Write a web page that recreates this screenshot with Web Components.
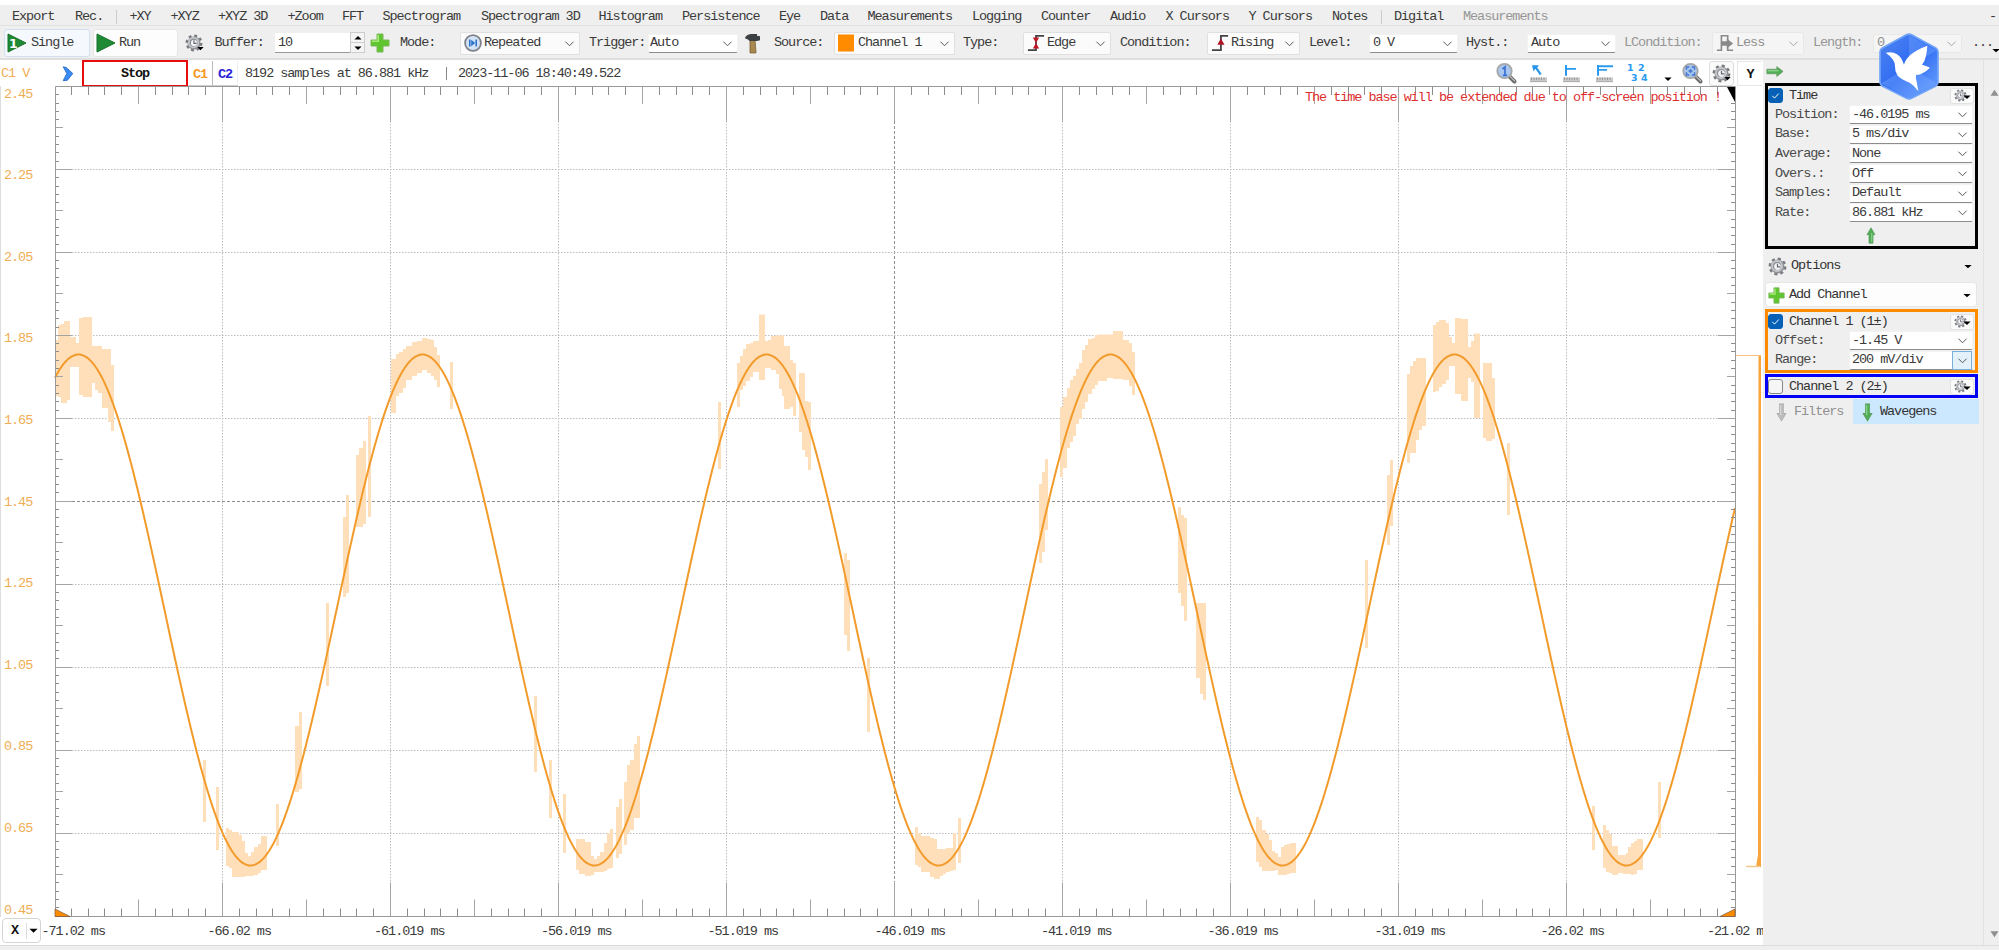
<!DOCTYPE html>
<html lang="en">
<head>
<meta charset="utf-8">
<title>Oscilloscope</title>
<style>
  html, body {
    margin: 0;
    width: 1999px;
    height: 950px;
    overflow: hidden;
    background: #fff;
  }
</style>
</head>
<body>
<scope-app></scope-app>

<script>
const define = (tagName, html, setup) => {
  const template = document.createElement('template');
  template.innerHTML = html;

  customElements.define(tagName, class extends HTMLElement {
    constructor() {
      super();
      this.attachShadow({ mode: 'open' }).appendChild(template.content.cloneNode(true));
    }

    connectedCallback() {
      setup?.call(this, this.shadowRoot);
    }
  });
};

/* ---------- icons ---------- */

const magnifier = (inner) => `
  <path d="M13.500 13.500l5 5" stroke="#6b6b6b" stroke-width="4" stroke-linecap="round"/>
  <path d="M14 13.300l4.600 4.600" stroke="#c4c4c4" stroke-width="1.200" stroke-linecap="round"/>
  <circle cx="8.500" cy="8" r="7.200" fill="#a9c6ee" stroke="#a6a6a6" stroke-width="1.800"/>
  ${inner}`;

const ruler = '<rect x="1" y="15" width="17" height="5" fill="#c9c9c9"/><path d="M2.500 15v2.500M5 15v2.500M7.500 15v2.500M10 15v2.500M12.500 15v2.500M15 15v2.500" stroke="#888" stroke-width=".9"/><path d="M1 19.600h17" stroke="#aaa"/>';

const arrow = (from, to, edge) => `<path d="M6 1h8v10h4L10 19 2 11h4z" fill="${from}" stroke="${edge}" stroke-width="1.100"/><path d="M8.500 2v11" stroke="${to}" stroke-width="2"/>`;

const icons = {
  single: '<path d="M1 1l18 9-18 9z" fill="#1e8a33" stroke="#14702a"/><text x="2" y="14.500" font-size="12.500" font-weight="700" fill="#fff" font-family="DejaVu Sans, sans-serif">1</text>',
  run: '<path d="M1 1l18 9-18 9z" fill="#1e8a33" stroke="#14702a"/>',
  gear: `<circle cx="10" cy="10" r="7.800" fill="none" stroke="#77797c" stroke-width="3.200" stroke-dasharray="3.100 3.026"/>
    <circle cx="10" cy="10" r="5.300" fill="none" stroke="#8d9095" stroke-width="4"/>
    <circle cx="9.500" cy="9.500" r="5.300" fill="none" stroke="#c3c6ca" stroke-width="2"/>
    <circle cx="10" cy="10" r="3.300" fill="#f3f3f3"/><path d="M10 7v3.500h3" fill="none" stroke="#667" stroke-width="1.300"/>`,
  plus: '<path d="M7 1h6v6h6v6h-6v6H7v-6H1V7h6z" fill="#5fc52e" stroke="#7bb85c"/><path d="M8.200 2v6.200H2" fill="none" stroke="#a6ea78" stroke-width="1.600"/>',
  repeated: '<circle cx="10" cy="10" r="8.800" fill="#d5e3f6" stroke="#7e8289" stroke-width="2"/><path d="M5.500 6h1.800v8H5.500zM12.700 6h1.800v8h-1.800zM12.500 10L8 6.500v7z" fill="#2c74c9"/>',
  hammer: '<path d="M8 6h5l1 13H8z" fill="#a98850" stroke="#7d6236" stroke-width=".8"/><path d="M3 5c1-3 4-4 7-4h5v1.500l3 .5v4l-3 .5H7.500C6 6 4.500 5.500 3 5z" fill="#3d4043"/>',
  square: '<rect x="2" y="1.500" width="16" height="17" fill="#ff8c00"/>',
  edge: '<path d="M1 18h9V2h9" fill="none" stroke="#444" stroke-width="2"/><path d="M6.500 4l3.500 6 3.500-6zM6.500 16l3.500-6 3.500 6z" fill="#c01525"/>',
  rising: '<path d="M1 18h10V2h8" fill="none" stroke="#444" stroke-width="2"/><path d="M7 12l4-7 4 7z" fill="#b01525"/>',
  less: '<path d="M1 18h5V2h7v16h6" fill="none" stroke="#8a8a8a" stroke-width="1.800"/><path d="M6 8h6V5l7 5.500-7 5.500v-3H6z" fill="#8a8a8a"/>',
  chevron: '<path d="M2 1l5 1 11 8-9 9-7 .5L8 10z" fill="#3a8df5" stroke="#1f62c4" stroke-width="1.200"/>',
  zoomone: magnifier('<path d="M6.500 6l2.500-2v8.500M6.800 12.300h4.400" fill="none" stroke="#3b6fd0" stroke-width="1.700"/>'),
  zoomfit: magnifier('<path d="M4.500 6.800V4h2.800M9.700 4h2.800v2.800M12.500 9.200V12H9.700M7.300 12H4.500V9.200M6.500 8h4M8.500 6v4" fill="none" stroke="#4477d0" stroke-width="1.500"/>'),
  pointer: ruler + '<path d="M3 1.500h7L8.200 4l4.500 7-2 1.200-4.300-7L4.500 8z" fill="#2595ee"/>',
  bar: ruler + '<path d="M4 1v12M4 5.500h10" stroke="#2a9af0" stroke-width="2" fill="none"/>',
  bars: ruler + '<path d="M3 1v12M3 2.500h15M3 6.500h9" stroke="#2a9af0" stroke-width="2" fill="none"/>',
  grid: '<g font-family="DejaVu Sans, sans-serif" font-size="9.500" font-weight="700" fill="#2a9af0"><text x="-1" y="8">1</text><text x="10" y="8">2</text><text x="3" y="19">3</text><text x="13" y="19">4</text></g>',
  up: `<g transform="rotate(180 10 10)">${arrow('#4fae55', '#93d68f', '#5b9a5c')}</g>`,
  down: arrow('#4fae55', '#93d68f', '#5b9a5c'),
  downoff: arrow('#bcbcbc', '#d8d8d8', '#adadad'),
  right: '<path d="M1 7h11V3.500L19 10l-7 6.500V13H1z" fill="#4fae55" stroke="#6c9a6a"/><path d="M2 9h12" stroke="#93d68f" stroke-width="1.600"/>',
  caret: '<path d="M1 6h18l-9 9z" fill="#000"/>',
  open: '<path d="M1 6l9 9 9-9" fill="none" stroke="#555" stroke-width="2.200"/>',
  triup: '<path d="M10 2l9 15H1z" fill="#8f8f8f"/>',
  tridown: '<path d="M10 18l9-15H1z" fill="#8f8f8f"/>',
  check: '<path d="M5 10.500l3.500 3.500L15 7" fill="none" stroke="#fff" stroke-width="1.500"/>',
};

define('ui-icon', /* html */ `
  <style>
    :host { display: inline-block; flex: none; width: 20px; height: 20px; }
    svg { display: block; width: 100%; height: 100%; overflow: visible; }
  </style>
  <svg viewBox="0 0 20 20" preserveAspectRatio="none"></svg>
`, function (root) {
  root.querySelector('svg').innerHTML = icons[this.getAttribute('name')];
});

/* ---------- controls ---------- */

define('tool-button', /* html */ `
  <style>
    :host {
      display: flex;
      align-items: center;
      gap: 4px;
      box-sizing: border-box;
      border: 1px solid #e6e6e6;
      border-radius: 3px;
      background: #fdfdfd;
    }
    :host([active]) { background: #f5f8fc; border-color: #d3e0f0; }
  </style>
  <slot></slot>
`);

define('combo-box', /* html */ `
  <style>
    :host {
      display: flex;
      align-items: center;
      box-sizing: border-box;
      height: 23px;
      padding: 0 5px 0 3px;
      border: 1px solid #e0e0e0;
      border-radius: 2px;
      background: #fbfbfb;
    }
    :host([editable]) {
      height: 19px;
      border-color: #f2f2f2;
      border-bottom: 1px solid #8c8c8c;
      background: #fff;
    }
    :host([disabled]) { color: #909090; background: #f5f5f5; border-color: #e8e8e8; }
    .value { flex: 1; display: flex; align-items: center; gap: 2px; }
    ui-icon { width: 9px; height: 9px; }
    :host([disabled]) ui-icon { opacity: .5; }
    .drop { display: flex; align-items: center; }
    :host([hot]) { padding-right: 0; }
    :host([hot]) .drop {
      box-sizing: border-box;
      width: 20px;
      height: 19px;
      padding-left: 5px;
      background: #e3f1fb;
      border: 1px solid #7aaedb;
    }
  </style>
  <span class="value"><slot></slot></span>
  <span class="drop"><ui-icon name="open"></ui-icon></span>
`);

define('gear-button', /* html */ `
  <style>
    :host {
      display: flex;
      align-items: center;
      justify-content: center;
      box-sizing: border-box;
      width: 24px;
      height: 16px;
      border: 1px solid #e2e2e2;
      border-radius: 3px;
      background: #fbfbfb;
    }
    .gear { width: 13px; height: 13px; }
    .caret { width: 8px; height: 8px; margin: 2px 0 0 -4px; }
  </style>
  <ui-icon class="gear" name="gear"></ui-icon>
  <ui-icon class="caret" name="caret"></ui-icon>
`);

define('check-box', /* html */ `
  <style>
    :host {
      display: block;
      box-sizing: border-box;
      width: 15px;
      height: 15px;
      border: 1px solid #888;
      border-radius: 3px;
      background: #f6f6f6;
    }
    :host([checked]) { background: #0560b6; border-color: #0560b6; }
    ui-icon { display: none; width: 13px; height: 13px; }
    :host([checked]) ui-icon { display: block; }
  </style>
  <ui-icon name="check"></ui-icon>
`);

define('group-box', /* html */ `
  <style>
    :host {
      display: block;
      box-sizing: border-box;
      width: 213px;
      border: 3px solid var(--edge, #000);
      background: #efefef;
    }
    header { display: flex; align-items: center; height: 19px; }
    .title { flex: 1; margin-left: 6px; padding-top: 1px; color: #333; }
    gear-button { margin-right: 1px; }
  </style>
  <header>
    <check-box></check-box>
    <span class="title"></span>
    <gear-button></gear-button>
  </header>
  <slot></slot>
`, function (root) {
  root.querySelector('check-box').toggleAttribute('checked', this.hasAttribute('checked'));
  root.querySelector('.title').textContent = this.getAttribute('label');
});

define('field-row', /* html */ `
  <style>
    :host { display: flex; align-items: center; height: 19.600px; padding-left: 7px; }
    .name { width: 74px; color: #4a4a4a; }
    combo-box { width: 124px; height: 19px; padding-left: 2px; }
  </style>
  <span class="name"></span>
  <combo-box editable><slot></slot></combo-box>
`, function (root) {
  root.querySelector('.name').textContent = this.getAttribute('label');
  root.querySelector('combo-box').toggleAttribute('hot', this.hasAttribute('hot'));
});

/* ---------- menu ---------- */

// label and the room it takes up to the next entry
const menu = [
  ['Export', 63], ['Rec.', 41], ['|', 13.5], ['+XY', 41], ['+XYZ', 47.5], ['+XYZ 3D', 69.5],
  ['+Zoom', 54.5], ['FFT', 40.5], ['Spectrogram', 98.5], ['Spectrogram 3D', 117.5],
  ['Histogram', 83.5], ['Persistence', 97], ['Eye', 41], ['Data', 47.5], ['Measurements', 104.5],
  ['Logging', 69], ['Counter', 69], ['Audio', 55.5], ['X Cursors', 83], ['Y Cursors', 83.5],
  ['Notes', 49], ['|', 13], ['Digital', 69], ['Measurements', 526, 'off'], ['-', 10],
];

define('menu-bar', /* html */ `
  <style>
    :host {
      display: flex;
      align-items: center;
      box-sizing: border-box;
      height: 21px;
      padding: 3px 0 0 12px;
      background: #efefef;
      border-bottom: 1px solid #e2e2e2;
      white-space: nowrap;
    }
    span { flex: none; }
    .off { color: #969696; }
    .sep { height: 14px; box-sizing: border-box; border-left: 1px solid #ccc; }
  </style>
`, function (root) {
  for (const [label, width, cls] of menu) {
    const item = document.createElement('span');
    item.style.width = `${width}px`;
    if (label === '|') {
      item.className = 'sep';
    } else {
      item.textContent = label;
      item.className = cls ?? '';
    }
    root.append(item);
  }
});

/* ---------- toolbar ---------- */

define('tool-bar', /* html */ `
  <style>
    :host {
      display: flex;
      align-items: center;
      box-sizing: border-box;
      height: 34px;
      padding: 2px 0 0 4px;
      background: #efefef;
      border-bottom: 2px solid #dfdfdf;
      white-space: nowrap;
    }
    span, tool-button, combo-box { flex: none; }
    .label { margin-left: 9px; box-sizing: border-box; }
    .off { color: #969696; }
    .i18 { width: 18px; height: 18px; }
    .spin {
      display: flex;
      box-sizing: border-box;
      width: 89px;
      height: 20px;
      background: #fff;
      border-bottom: 1px solid #999;
      align-items: center;
      padding-left: 3px;
      justify-content: space-between;
    }
    .steps { display: flex; flex-direction: column; width: 13px; background: #e9e9e9; gap: 1px; }
    .steps i { display: flex; height: 9px; align-items: center; justify-content: center; background: #f5f5f5; outline: 1px solid #ccc; }
    .steps ui-icon { width: 8px; height: 8px; }
    .steps i:first-child ui-icon { transform: rotate(180deg); }
    .gear { display: flex; align-items: flex-end; width: 29.500px; margin-left: 7px; }
    .gear ui-icon + ui-icon { width: 7px; height: 7px; margin-left: -6px; }
  </style>
  <tool-button active style="width:86px;height:28px;padding-left:2px"><ui-icon name="single"></ui-icon><span>Single</span></tool-button>
  <tool-button style="width:85px;height:28px;margin-left:3px;padding-left:2px;gap:3px"><ui-icon name="run"></ui-icon><span>Run</span></tool-button>
  <span class="gear"><ui-icon class="i18" name="gear"></ui-icon><ui-icon name="caret"></ui-icon></span>
  <span style="width:60.500px">Buffer:</span>
  <span class="spin">10<span class="steps"><i><ui-icon name="caret"></ui-icon></i><i><ui-icon name="caret"></ui-icon></i></span></span>
  <ui-icon name="plus" style="margin-left:6px"></ui-icon>
  <span class="label" style="width:60px;margin-left:10px">Mode:</span>
  <combo-box style="width:120px"><ui-icon class="i18" name="repeated"></ui-icon>Repeated</combo-box>
  <span class="label" style="width:59px">Trigger:</span>
  <combo-box editable style="width:90px;padding-left:1px">Auto</combo-box>
  <ui-icon name="hammer" style="width:20px;height:21px;margin-left:4px"></ui-icon>
  <span class="label" style="width:60px;margin-left:12px">Source:</span>
  <combo-box style="width:121px;padding-left:1px"><ui-icon name="square"></ui-icon>Channel 1</combo-box>
  <span class="label" style="width:60px;margin-left:8px">Type:</span>
  <combo-box style="width:88px"><ui-icon class="i18" name="edge"></ui-icon>Edge</combo-box>
  <span class="label" style="width:87px">Condition:</span>
  <combo-box style="width:93px"><ui-icon class="i18" name="rising"></ui-icon>Rising</combo-box>
  <span class="label" style="width:60px">Level:</span>
  <combo-box editable style="width:89px">0 V</combo-box>
  <span class="label" style="width:61px;margin-left:8px">Hyst.:</span>
  <combo-box editable style="width:89px">Auto</combo-box>
  <span class="label off" style="width:88px;margin-left:8px">LCondition:</span>
  <combo-box disabled style="width:92px"><ui-icon class="i18" name="less"></ui-icon>Less</combo-box>
  <span class="label off" style="width:60px">Length:</span>
  <combo-box disabled style="width:89px;height:19px">0</combo-box>
  <span style="margin-left:10px">...</span>
  <ui-icon name="caret" style="width:8px;height:7px;margin:14px 0 0 -1px"></ui-icon>
`);

/* ---------- acquisition line above the plot ---------- */

define('status-line', /* html */ `
  <style>
    :host { display: flex; align-items: center; height: 26px; background: #fff; white-space: nowrap; }
    span, ui-icon { flex: none; box-sizing: border-box; }
    .text { padding-top: 2px; }
    .unit { width: 62px; padding-left: 1px; color: #f0ad55; }
    .stop {
      width: 106px;
      height: 27px;
      margin-left: 8px;
      border: 2.500px solid #e80c0c;
      text-align: center;
      line-height: 24px;
      font-weight: 700;
      color: #111;
    }
    .ch { width: 25px; height: 25px; line-height: 27px; font-weight: 700; text-align: center; border-right: 1px solid #bbb; border-bottom: 1px solid #ccc; }
    .sep { width: 1px; height: 13px; background: #888; margin: 0 11px 0 17px; }
    .tools { display: flex; align-items: center; height: 26px; }
    .tools ui-icon { width: 20px; height: 20px; }
    .gear { display: flex; align-items: center; justify-content: center; width: 25px; height: 25px; border: 1px solid #ddd; border-radius: 3px; background: #fafafa; }
    .y { width: 25px; height: 25px; line-height: 26px; text-align: center; font-weight: 700; border: 1px solid #e6e6e6; border-right: 0; color: #111; }
  </style>
  <span class="unit text">C1 V</span>
  <ui-icon name="chevron" style="width:12px;height:15px"></ui-icon>
  <span class="stop">Stop</span>
  <span class="ch" style="color:#f39a25">C1</span>
  <span class="ch" style="color:#2a22d8;border-right-color:#eee">C2</span>
  <span class="text" style="width:191px;padding-left:7px">8192 samples at 86.881 kHz</span>
  <span class="sep"></span>
  <span class="text" style="width:1038px">2023-11-06 18:40:49.522</span>
  <span class="tools">
    <ui-icon name="zoomone"></ui-icon>
    <ui-icon name="pointer" style="margin-left:13px;height:18px"></ui-icon>
    <ui-icon name="bar" style="margin-left:13px;height:18px"></ui-icon>
    <ui-icon name="bars" style="margin-left:13px;height:18px"></ui-icon>
    <ui-icon name="grid" style="margin-left:13px;height:18px"></ui-icon>
    <ui-icon name="caret" style="width:8px;height:8px;margin:12px 10px 0 16px"></ui-icon>
    <ui-icon name="zoomfit"></ui-icon>
    <span class="gear" style="margin-left:7px"><ui-icon name="gear" style="width:19px;height:19px"></ui-icon><ui-icon name="caret" style="width:7px;height:7px;margin:11px 0 0 -7px"></ui-icon></span>
  </span>
  <span class="y" style="margin-left:3px">Y</span>
`);

/* ---------- plot ---------- */

const plot = { left: 55, right: 1735, top: 87, bottom: 916.5, cols: 10, rows: 10 };
const wave = { peak: 78.5, period: 344, mid: 610, amp: 255.5 };

// min/max envelope of the oversampled trace: x0, x1, top, bottom
const envelope = [
  [55, 58, 340, 396], [58, 61, 325, 397], [61, 64, 324, 403], [64, 67, 321, 403], [67, 70, 321, 400],
  [70, 76, 337, 367], [76, 79, 343, 367], [79, 83, 318, 395], [83, 92, 317, 397], [92, 95, 346, 383],
  [95, 98, 346, 390], [98, 102, 346, 393], [102, 108, 349, 408], [108, 111, 349, 422], [111, 114, 365, 431],
  [203, 206, 760, 822], [216, 219, 787, 850], [226, 229, 828, 866], [229, 232, 830, 868], [232, 239, 832, 877],
  [239, 242, 835, 877], [242, 245, 841, 877], [245, 248, 853, 876], [248, 251, 856, 876], [251, 254, 852, 876],
  [254, 258, 847, 875], [258, 261, 844, 873], [261, 267, 836, 870], [276, 279, 804, 846], [295, 299, 726, 792],
  [299, 302, 712, 789], [326, 329, 603, 686], [343, 346, 517, 597], [346, 349, 495, 593], [356, 359, 455, 527],
  [359, 363, 448, 527], [363, 366, 441, 524], [368, 371, 416, 517], [391, 396, 359, 413], [396, 399, 354, 396],
  [399, 403, 352, 393], [403, 406, 349, 388], [406, 412, 346, 380], [412, 417, 342, 376], [417, 422, 341, 373],
  [422, 427, 338, 370], [427, 431, 339, 373], [431, 434, 340, 376], [434, 437, 347, 380], [437, 440, 355, 387],
  [450, 453, 362, 409], [534, 537, 696, 772], [549, 552, 760, 818], [563, 566, 794, 853], [576, 579, 839, 870],
  [579, 585, 839, 874], [585, 591, 842, 876], [591, 594, 856, 875], [594, 597, 859, 872], [597, 600, 856, 872],
  [600, 604, 852, 872], [604, 607, 843, 871], [607, 610, 833, 869], [610, 613, 829, 868], [616, 619, 807, 858],
  [619, 622, 799, 854], [624, 627, 782, 845], [627, 630, 765, 833], [630, 634, 760, 830], [634, 637, 744, 818],
  [637, 640, 736, 818], [718, 721, 402, 469], [737, 740, 363, 407], [740, 743, 356, 390], [743, 746, 349, 386],
  [746, 750, 344, 381], [750, 753, 343, 377], [753, 759, 341, 372], [759, 765, 314.5, 380], [765, 768, 341, 368],
  [768, 771, 340, 368], [771, 776, 336, 370], [776, 779, 335.5, 374], [779, 782, 335.5, 389], [782, 784, 335.5, 396],
  [784, 790, 346, 409], [790, 793, 360, 407], [793, 796, 363, 416], [799, 802, 373, 432], [802, 805, 373, 450],
  [805, 808, 401, 457], [808, 811, 402, 470], [844, 847, 553, 635], [847, 850, 560, 651], [867, 870, 658, 732],
  [915, 918, 827, 865], [918, 921, 833, 867], [921, 930, 836, 872], [930, 934, 838, 877], [934, 937, 839, 879],
  [937, 940, 849, 879], [940, 943, 849, 876], [943, 946, 849, 874], [946, 950, 848, 872], [950, 953, 848, 871],
  [953, 956, 833, 870], [958, 961, 818, 863], [1039, 1042, 484, 563], [1042, 1045, 472, 552], [1045, 1048, 459, 530],
  [1060, 1063, 407, 477], [1063, 1067, 397, 468], [1067, 1070, 388, 448], [1070, 1073, 380, 442], [1073, 1076, 376, 436],
  [1076, 1079, 369, 424], [1079, 1082, 363, 419], [1082, 1085, 350, 409], [1085, 1088, 345, 402], [1088, 1092, 339, 394],
  [1092, 1095, 338, 389], [1095, 1098, 335, 385], [1098, 1107, 334.5, 381], [1107, 1113, 334.5, 378], [1113, 1123, 331, 379],
  [1123, 1129, 340, 380], [1129, 1132, 343, 386], [1132, 1135, 352, 395], [1178, 1181, 507, 593], [1181, 1184, 515, 606],
  [1184, 1187, 518, 621], [1196, 1200, 603, 678], [1200, 1203, 603, 694], [1203, 1206, 603, 700], [1256, 1259, 817, 862],
  [1259, 1262, 820, 867], [1262, 1266, 830, 871], [1266, 1269, 834, 871], [1269, 1272, 840, 871], [1272, 1275, 851, 871],
  [1275, 1278, 853, 870], [1278, 1281, 857, 875], [1281, 1284, 847, 875], [1284, 1287, 845, 875], [1287, 1290, 844, 874],
  [1290, 1296, 843, 873], [1365, 1368, 560, 648], [1387, 1390, 475, 545], [1390, 1393, 460, 526], [1407, 1410, 374, 463],
  [1410, 1413, 366, 453], [1413, 1416, 361, 453], [1416, 1419, 358, 440], [1419, 1422, 358, 430], [1422, 1426, 358, 426],
  [1433, 1436, 325, 392], [1436, 1439, 322, 391], [1439, 1442, 320, 387], [1442, 1446, 320, 384], [1446, 1449, 323, 380],
  [1449, 1452, 337, 366], [1452, 1455, 343, 366], [1455, 1461, 318, 394], [1461, 1468, 319, 401], [1468, 1471, 347, 378],
  [1471, 1474, 341, 382], [1474, 1480, 333.5, 418], [1483, 1486, 363, 438], [1486, 1492, 363, 441], [1492, 1495, 378, 439],
  [1507, 1510, 443, 515], [1592, 1595, 806, 850], [1603, 1606, 825, 868], [1606, 1609, 830, 872], [1609, 1612, 834, 873],
  [1612, 1618, 846, 875], [1618, 1623, 855, 873], [1623, 1626, 855, 874], [1626, 1628, 853, 874], [1628, 1631, 847, 874],
  [1631, 1634, 843, 875], [1634, 1637, 841, 874], [1637, 1643, 839, 870], [1658, 1661, 782, 838],
];

const gridLines = () => {
  const { left, right, top, bottom, cols, rows } = plot;
  let out = '';
  for (let i = 1; i < cols; i++) {
    const x = Math.round(left + (right - left) * i / cols) - 0.5;
    const mid = i === cols / 2;
    out += `<path d="M${x} ${top + 34}V${bottom - 34}" stroke="${mid ? '#8f8f8f' : '#bdbdbd'}" stroke-dasharray="${mid ? '3 2' : '1.500 1.500'}"/>`;
  }
  for (let i = 1; i < rows; i++) {
    const y = Math.round(top + (bottom - top) * i / rows - 1) + 0.5;
    const mid = i === rows / 2;
    out += `<path d="M${left + 17} ${y}H${right - 17}" stroke="${mid ? '#8f8f8f' : '#bdbdbd'}" stroke-dasharray="${mid ? '3 2' : '1.500 1.500'}"/>`;
  }
  return out;
};

const ticks = () => {
  const { left, right, top, bottom } = plot;
  const d = ['', '', ''];
  for (let i = 1; i < 100; i++) {
    const level = i % 10 === 0 ? 2 : i % 5 === 0 ? 1 : 0;
    const x = Math.round(left + (right - left) * i / 100) - 0.5;
    const y = Math.round(top + (bottom - top) * i / 100 - 1) + 0.5;
    const v = [8, 17, 34][level];
    const h = [4, 8, 17][level];
    d[level] += `M${x} ${top}v${v}M${x} ${bottom}v${-v}M${left} ${y}h${h}M${right} ${y}h${-h}`;
  }
  return d.map((path, i) => `<path d="${path}" stroke="${['#8c8c8c', '#a4a4a4', '#a4a4a4'][i]}"/>`).join('');
};

const trace = () => {
  let d = '';
  for (let x = plot.left; x <= plot.right; x += 2) {
    const y = wave.mid - wave.amp * Math.cos(2 * Math.PI * (x - wave.peak) / wave.period);
    d += `${d ? 'L' : 'M'}${x} ${y.toFixed(2)}`;
  }
  return `<path d="${d}" fill="none" stroke="#f29b2b" stroke-width="2"/>`;
};

define('scope-plot', /* html */ `
  <style>
    :host { display: block; height: 831px; }
    svg { display: block; }
    text { white-space: pre; }
  </style>
  <svg width="1763" height="831" viewBox="0 86 1763 831"></svg>
`, function (root) {
  const labels = Array.from({ length: 11 }, (_, i) =>
    `<text x="4" y="${97.5 + i * 81.6}" fill="#f0ad55">${(2.45 - i * 0.2).toFixed(2)}</text>`);

  root.querySelector('svg').innerHTML = `
    ${gridLines()}
    <path d="${envelope.map(([a, b, t, u]) => `M${a} ${t}H${b}V${u}H${a}z`).join('')}" fill="#ffdfba"/>
    ${trace()}
    ${ticks()}
    <path d="M55.500 916V86.500H1735.500V916.500H55.500" fill="none" stroke="#999"/>
    <path d="M55 909l15 7.500H55zM1735 909l-15 7.500h15z" fill="#ff8c00" stroke="#754" stroke-width=".7"/>
    <path d="M1727 87h8v15z" fill="#000"/>
    <text x="1305" y="100.500" fill="#dc3030" textLength="416">The time base will be extended due to off-screen position !</text>
    ${labels.join('')}
    <path d="M1736 355.500h25" stroke="#f7c27f"/>
    <path d="M1758.500 356h2.500V867h-5l2-12z" fill="#f7a53c"/>
    <path d="M1746 866.500h14" stroke="#f3c890" stroke-width="1.500"/>
    <path d="M.5 86V917" stroke="#ddd"/>`;
});

define('time-axis', /* html */ `
  <style>
    :host { display: flex; height: 28px; padding-left: 2px; }
    .x {
      display: flex;
      flex: none;
      align-items: center;
      box-sizing: border-box;
      width: 39px;
      height: 25px;
      margin-top: 1px;
      border: 1px solid #d5d5d5;
      border-radius: 4px;
      font-weight: 700;
      color: #111;
    }
    .x span { width: 23px; text-align: center; border-right: 1px solid #ddd; }
    .x ui-icon { width: 9px; height: 9px; margin-left: 2px; }
    svg { display: block; }
  </style>
  <div class="x"><span>X</span><ui-icon name="caret"></ui-icon></div>
  <svg width="1722" height="28" viewBox="41 917 1722 28"></svg>
`, function (root) {
  const labels = [
    [41.5, '-71.02 ms'], [207.5, '-66.02 ms'], [374, '-61.019 ms'], [541, '-56.019 ms'],
    [707.5, '-51.019 ms'], [874.5, '-46.019 ms'], [1041, '-41.019 ms'], [1207.5, '-36.019 ms'],
    [1374.5, '-31.019 ms'], [1540.5, '-26.02 ms'], [1707, '-21.02 ms'],
  ];
  root.querySelector('svg').innerHTML = labels
    .map(([x, t]) => `<text x="${x}" y="934.5" fill="currentColor">${t}</text>`).join('');
});

/* ---------- side panel ---------- */

define('side-panel', /* html */ `
  <style>
    :host { display: flex; width: 236px; background: #efefef; }
    .stack { display: flex; flex-direction: column; width: 221px; box-sizing: border-box; padding-left: 2px; border-right: 1px solid #e2e2e2; }
    .top { height: 23px; }
    .top ui-icon { width: 18px; height: 15px; margin: 4px 0 0 1px; }
    .row { display: flex; align-items: center; box-sizing: border-box; width: 213px; padding: 0 6px 0 3px; color: #333; }
    .row > span { flex: 1; }
    .caret { width: 8px; height: 7px; }
    .scroll { display: flex; flex-direction: column; align-items: center; justify-content: space-between; flex: 1; padding: 29px 0 7px 5px; }
    .scroll ui-icon { width: 9px; height: 8px; }
  </style>
  <div class="stack">
    <div class="top"><ui-icon name="right"></ui-icon></div>
    <group-box checked label="Time" style="height:166px">
      <field-row label="Position:">-46.0195 ms</field-row>
      <field-row label="Base:">5 ms/div</field-row>
      <field-row label="Average:">None</field-row>
      <field-row label="Overs.:">Off</field-row>
      <field-row label="Samples:">Default</field-row>
      <field-row label="Rate:">86.881 kHz</field-row>
      <ui-icon name="up" style="width:10px;height:17px;margin:4px 0 0 98px"></ui-icon>
    </group-box>
    <div class="row" style="height:33px;padding-top:1px"><ui-icon name="gear" style="width:19px;height:19px;margin-right:4px"></ui-icon><span>Options</span><ui-icon class="caret" name="caret"></ui-icon></div>
    <tool-button style="width:212px;height:25px;padding:1px 5px 0 2px;color:#333">
      <ui-icon name="plus" style="width:17px;height:17px"></ui-icon><span style="flex:1">Add Channel</span><ui-icon class="caret" name="caret"></ui-icon>
    </tool-button>
    <group-box checked label="Channel 1 (1±)" style="--edge:#ff8c00;height:64px;margin-top:2px">
      <field-row label="Offset:">-1.45 V</field-row>
      <field-row label="Range:" hot>200 mV/div</field-row>
    </group-box>
    <group-box label="Channel 2 (2±)" style="--edge:#0000f5;height:24px;margin-top:1px"></group-box>
    <div style="display:flex;height:25px;margin-top:1px">
      <div class="row" style="width:88px;padding:1px 0 0 11px;color:#909090"><ui-icon name="downoff" style="width:11px;height:19px;margin-right:7px"></ui-icon>Filters</div>
      <div class="row" style="width:126px;padding:1px 0 0 9px;background:#cce8ff"><ui-icon name="down" style="width:11px;height:19px;margin-right:7px"></ui-icon>Wavegens</div>
    </div>
  </div>
  <div class="scroll"><ui-icon name="triup"></ui-icon><ui-icon name="tridown"></ui-icon></div>
`);

define('bird-badge', /* html */ `
  <style>
    :host { display: block; width: 60px; height: 67px; }
    svg { display: block; width: 100%; height: 100%; }
  </style>
  <svg viewBox="1197 14 180 201">
    <defs>
      <linearGradient id="g" x1="0" y1="0" x2="1" y2="1">
        <stop offset="0" stop-color="#4f86f0"/><stop offset=".5" stop-color="#2f6bf3"/><stop offset="1" stop-color="#6ea6ff"/>
      </linearGradient>
    </defs>
    <path d="M1278 20q9-5 18 0l70 38q8 5 8 14v88q0 9-8 14l-70 35q-9 5-18 0l-70-35q-8-5-8-14v-88q0-9 8-14z" fill="url(#g)" stroke="#72a5f8" stroke-width="5"/>
    <path d="M1287 20l83 46-83 50zM1203 165l84 45 83-45-83-49z" fill="#7db0ff" opacity=".35"/>
    <path d="M1217 73q14-3 24 0 22 6 31 36 2-12 18-28 20-18 52-29-1 18-4 30-3 16-12 27 12 3 24 9-10 10-20 15-10 7-22 7-2 8 2 20l5 29q-12-18-26-26-26-10-36-21-9-13-8-28 1-10-6-20-8-12-22-21z" fill="#fff"/>
  </svg>
`);

/* ---------- window ---------- */

define('scope-app', /* html */ `
  <style>
    :host {
      display: flex;
      flex-direction: column;
      position: relative;
      box-sizing: border-box;
      width: 1999px;
      height: 950px;
      padding-top: 5px;
      font: 13.500px/16px "Liberation Mono", monospace;
      letter-spacing: -1.050px;
      color: #3a3a3a;
      background: #fff;
    }
    main { display: flex; height: 885px; }
    .view { width: 1763px; }
    footer { flex: 1; background: #efefef; border-top: 1px solid #dcdcdc; }
    bird-badge { position: absolute; left: 1879px; top: 33px; }
  </style>
  <menu-bar></menu-bar>
  <tool-bar></tool-bar>
  <main>
    <div class="view">
      <status-line></status-line>
      <scope-plot></scope-plot>
      <time-axis></time-axis>
    </div>
    <side-panel></side-panel>
  </main>
  <footer></footer>
  <bird-badge></bird-badge>
`);
</script>
</body>
</html>
